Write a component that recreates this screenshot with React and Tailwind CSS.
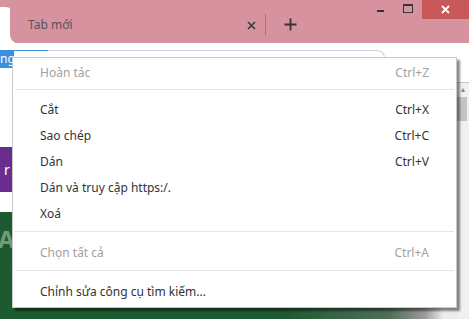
import React from "react";

function Item({ label, shortcut, disabled }) {
  return (
    <div className={`flex h-[26px] items-center justify-between pl-[27px] pr-[27px] ${disabled ? "text-[#a2a2a2]" : "text-[#333333]"}`}>
      <span>{label}</span>
      {shortcut && <span>{shortcut}</span>}
    </div>
  );
}

function Sep({ pt, pb }) {
  return (
    <div className={`${pt} ${pb} px-[2px]`}>
      <div className="h-px bg-[#e6e6e6]" />
    </div>
  );
}

export default function App() {
  return (
    <div className="relative h-[319px] w-[469px] overflow-hidden bg-white" style={{ fontFamily: '"Noto Sans", "Open Sans", sans-serif' }}>
      {/* Title bar */}
      <div className="flex h-[43px] bg-[#d6929f]">
        <div className="mt-[7px] h-[36px] w-[15px] shrink-0 rounded-tr-[9px] bg-white" />
        <div className="-ml-[5px] flex h-full flex-1 items-center rounded-bl-[8px] bg-[#d6929f]">
          <div className="flex w-[255px] items-center pl-[18px] pt-[7px]">
            <span className="flex-1 text-[12px] text-[#555]">Tab mới</span>
            <svg width="9" height="9" viewBox="0 0 9 9" className="mr-[9px]">
              <path d="M1 1L8 8M8 1L1 8" stroke="#3a3a3a" strokeWidth="1.6" />
            </svg>
          </div>
          <div className="mt-[6px] h-[21px] w-px bg-[#a8707c]" />
          <svg width="13" height="13" viewBox="0 0 13 13" className="ml-[18px] mt-[6px]">
            <path d="M6.5 0.5V12.5M0.5 6.5H12.5" stroke="#333" strokeWidth="1.8" />
          </svg>
          <div className="flex-1" />
          <div className="flex h-full items-start">
            <div className="mr-[19px] mt-[10px] h-[2px] w-[7px] bg-[#333]" />
            <div className="mr-[9px] mt-[4px] h-[9px] w-[10px] border border-t-2 border-[#333]" />
            <div className="flex h-[19px] w-[47px] items-center justify-center bg-[#c8585a]">
              <svg width="9" height="9" viewBox="0 0 9 9">
                <path d="M1 1L8 8M8 1L1 8" stroke="#ffffff" strokeWidth="1.8" />
              </svg>
            </div>
          </div>
        </div>
      </div>

      {/* Page below */}
      <div className="flex h-[276px] flex-col">
        <div className="h-[7px] bg-white" />
        <div className="flex h-[18px] items-start">
          <div className="flex h-[18px] w-[14px] items-center overflow-hidden bg-[#3b8fe0] text-[12px] leading-none text-white">ng</div>
          <div className="mr-[84px] h-[18px] flex-1 rounded-r-[8px] border-t-[1.5px] border-r border-[#c9d3e0]">
            <div className="h-[1.5px] w-[34px] -mt-[1.5px] bg-[#3b8fe0]" />
          </div>
        </div>
        <div className="flex flex-1">
          <div className="flex flex-1 flex-col">
            <div className="h-[79px] bg-white" />
            <div className="flex h-[45px] items-center bg-[#6a2c8f] pl-[4px] text-[14px] text-white">r</div>
            <div className="h-[20px] bg-white" />
            <div className="relative flex-1 bg-[linear-gradient(to_right,#1d5a30_0%,#1f5a32_62%,#4d6e58_85%,#9a9a9a_93%,#ececec_97%)]">
              <div className="absolute -left-[2px] top-[15px] text-[24px] font-bold leading-none text-[#6f9c7c]">A</div>
            </div>
          </div>
          <div className="flex w-[12px] flex-col bg-[#f0f0f0]">
            <div className="h-[15px] border-b border-[#c8c8c8] bg-white" />
            <div className="flex h-[14px] items-center justify-center text-[7px] text-[#888]">▲</div>
            <div className="h-[24px] w-[10px] bg-[#c3c3c3]" />
          </div>
        </div>
      </div>

      {/* Context menu */}
      <div className="absolute left-[12px] top-[57px] w-[445px] border border-[#c9c9c9] bg-white pt-[2px] pb-[2px] text-[12px] shadow-[3px_3px_2px_rgba(0,0,0,0.45)]">
        <Item label="Hoàn tác" shortcut="Ctrl+Z" disabled />
        <Sep pt="pt-[3px]" pb="pb-[7px]" />
        <Item label="Cắt" shortcut="Ctrl+X" />
        <Item label="Sao chép" shortcut="Ctrl+C" />
        <Item label="Dán" shortcut="Ctrl+V" />
        <Item label="Dán và truy cập https:/." />
        <Item label="Xoá" />
        <Sep pt="pt-[4px]" pb="pb-[8px]" />
        <Item label="Chọn tất cả" shortcut="Ctrl+A" disabled />
        <Sep pt="pt-[4px]" pb="pb-[8px]" />
        <Item label="Chỉnh sửa công cụ tìm kiếm..." />
      </div>
    </div>
  );
}
